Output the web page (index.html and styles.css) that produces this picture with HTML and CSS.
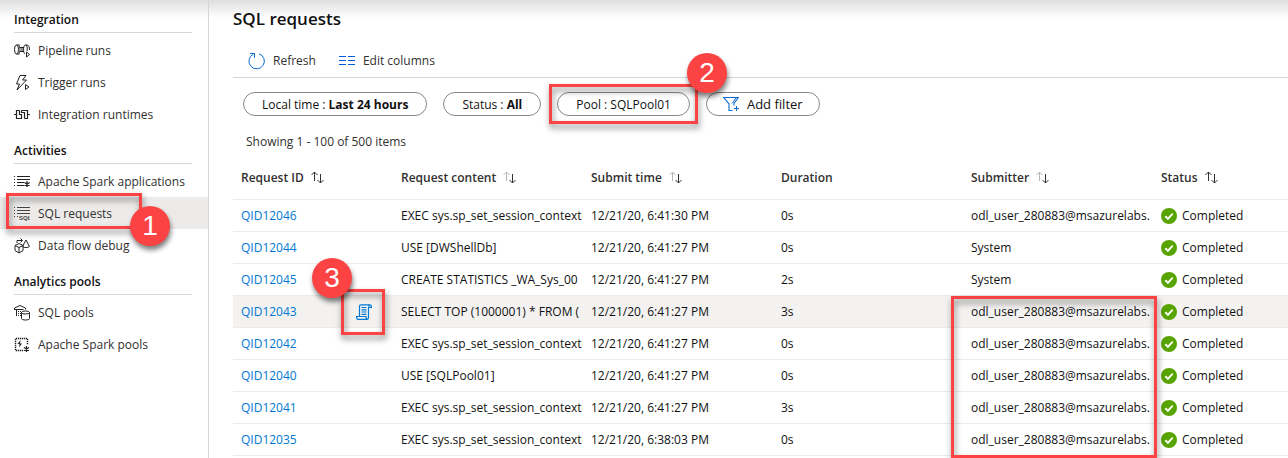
FILE: index.html
```html
<!DOCTYPE html>
<html lang="en">
<head>
<meta charset="utf-8">
<title>SQL requests</title>
<link rel="stylesheet" href="styles.css">
</head>
<body>
<svg class="defs" aria-hidden="true">
  <symbol id="sort" viewBox="0 0 16 16"><g fill="none" stroke="currentColor"><path class="sort-up" d="M4.500 11V2M1.500 5L4.500 2L7.500 5"/><path d="M10.500 4v9M7.500 10l3 3l3-3"/></g></symbol>
  <symbol id="ok" viewBox="0 0 16 16"><circle cx="8" cy="8" r="8" fill="#57a300"/><path d="M4.300 8.300l2.600 2.500 4.800-5.200" fill="none" stroke="#fff" stroke-width="1.900"/></symbol>
</svg>
<div class="app">
  <nav class="sidebar" aria-label="Monitor">
    <section class="group">
      <h2>Integration</h2>
      <ul>
        <li><a href="#"><svg class="icon" viewBox="0 0 16 16"><g fill="none" stroke="#222"><ellipse cx="2.500" cy="6.500" rx="2" ry="4.500"/><path d="M2.500 2h3M2.500 11h3"/><path d="M4.500 2c2 1 2 8 0 9M6 4.500h4M6 8.500h4M8 4.500v4"/><path d="M11 11c-2-1-2-8 0-9h2c2 0 2.500 2.500 2.500 5M12 2c1.500 1.500 1.500 4.500 1 6"/></g><path d="M12.500 9v5l3-2.500z" fill="#fff" stroke="#222"/></svg>Pipeline runs</a></li>
        <li><a href="#"><svg class="icon" viewBox="0 0 16 16"><path d="M6 .5h6L8.500 5h4L3 15l2.500-6h-3z" fill="none" stroke="#222"/><path d="M11.500 9.500v5l3.500-2.500z" fill="#fff" stroke="#222"/></svg>Trigger runs</a></li>
        <li><a href="#"><svg class="icon" viewBox="0 0 16 16"><path d="M0 7.500h2.500M13.500 7.500H16M5.500 3.500h-3v8h5v-4h-2v-4M7.500 3.500h6v8h-3M7.500 3.500v2h3v6" fill="none" stroke="#222" stroke-width="1.200"/></svg>Integration runtimes</a></li>
      </ul>
    </section>
    <section class="group">
      <h2>Activities</h2>
      <ul>
        <li><a href="#"><svg class="icon" viewBox="0 0 16 16"><path d="M3 2.500h13M3 5.500h13M3 8.500h7M3 11.500h7" stroke="#222"/><path d="M.5 2v1M.5 5v1M.5 8v1M.5 11v1" stroke="#222"/><path d="M13 7v6M10.400 8.500l5.200 3M15.600 8.500l-5.200 3" stroke="#222" stroke-width="1.200"/></svg>Apache Spark applications</a></li>
        <li class="current"><a href="#" aria-current="page"><svg class="icon" viewBox="0 0 16 16"><path d="M3 1.500h13M3 4.500h13M3 7.500h13" stroke="#444"/><path d="M.5 1v1M.5 4v1M.5 7v1M.5 10v1M3 10.500h1" stroke="#444"/><text class="sql" x="5" y="14">SQL</text></svg>SQL requests</a>
          <span class="box box-nav"></span><span class="badge badge-nav">1</span></li>
        <li><a href="#"><svg class="icon" viewBox="0 0 16 16"><g fill="none" stroke="#222"><path d="M5 5.500l4 2v5l-4 2.500-4-2.500v-5zM1 7.500l4 2 4-2M5 9.500V15"/><path d="M3 5V2.500h5M6.500.5l2 2-2 2"/><path d="M12 2L8.500 8.500c2 1.500 5 1.500 7 0z"/></g></svg>Data flow debug</a></li>
      </ul>
    </section>
    <section class="group">
      <h2>Analytics pools</h2>
      <ul>
        <li><a href="#"><svg class="icon" viewBox="0 0 16 16"><g fill="none" stroke="#222"><path d="M.5 5V3L6 .5 11.500 3v1.500M.5 4.500h9M2.500 5v6"/><path d="M4 6.500h3M4 8.500h3M4 10.500h3" stroke-dasharray="1 1"/><path d="M7.500 7.500v6c0 2 8 2 8 0v-6"/><ellipse cx="11.500" cy="7.500" rx="4" ry="1.500"/></g></svg>SQL pools</a></li>
        <li><a href="#"><svg class="icon" viewBox="0 0 16 16"><path d="M9 13.500H1.500v-12h12V8" fill="none" stroke="#222" stroke-width="1.500" stroke-dasharray="1.300 .7"/><path d="M6.500 3L3.500 7h2L5 10.500 8 6.500H6z" fill="#222"/><path d="M12.500 9v6M9.900 10.500l5.200 3M15.100 10.500l-5.200 3" stroke="#222" stroke-width="1.200"/></svg>Apache Spark pools</a></li>
      </ul>
    </section>
  </nav>
  <main class="main">
    <h1>SQL requests</h1>
    <div class="toolbar">
      <button type="button"><svg class="icon-lg" viewBox="0 0 18 18"><g fill="none" stroke="#0b6bd3"><path d="M11 1.800A7.700 7.700 0 1 1 5.300 2.200"/><path d="M2 1.500h4.500V6"/></g></svg>Refresh</button>
      <button type="button"><svg class="icon-lg" viewBox="0 0 18 18"><path d="M1 4.500h7M1 8.500h7M1 12.500h7M10 4.500h7M10 8.500h7M10 12.500h7" stroke="#015cda" stroke-width="1.200"/></svg>Edit columns</button>
    </div>
    <div class="filters">
      <button type="button" class="pill">Local time : <b>Last 24 hours</b></button>
      <button type="button" class="pill">Status : <b>All</b></button>
      <div class="marked"><button type="button" class="pill">Pool : SQLPool01</button><span class="box box-pool"></span><span class="badge badge-pool">2</span></div>
      <button type="button" class="pill add"><svg class="icon" viewBox="0 0 16 16"><path d="M11 9.500V7.500L15.300 1.500H.8L6 8v6.500h3.500" fill="none" stroke="#0b6bd3" stroke-width="1.100"/><path d="M9 7.500L13 2M13.500 10v5M11 12.500h5" stroke="#0b6bd3"/></svg>Add filter</button>
    </div>
    <p class="count">Showing 1 - 100 of 500 items</p>
    <table>
      <colgroup><col class="c-id"><col class="c-mid"><col class="c-mid"><col class="c-mid"><col class="c-mid"><col></colgroup>
      <thead>
        <tr>
          <th scope="col"><button type="button">Request ID<svg class="sort"><use href="#sort"/></svg></button></th>
          <th scope="col"><button type="button">Request content<svg class="sort dim"><use href="#sort"/></svg></button></th>
          <th scope="col"><button type="button">Submit time<svg class="sort dim"><use href="#sort"/></svg></button></th>
          <th scope="col">Duration</th>
          <th scope="col"><button type="button">Submitter<svg class="sort dim"><use href="#sort"/></svg></button></th>
          <th scope="col"><button type="button">Status<svg class="sort"><use href="#sort"/></svg></button></th>
        </tr>
      </thead>
      <tbody>
        <tr><td><a href="#">QID12046</a></td><td><div class="clip">EXEC sys.sp_set_session_context</div></td><td>12/21/20, 6:41:30 PM</td><td>0s</td><td><div class="clip">odl_user_280883@msazurelabs.</div></td><td><span class="status"><svg class="ok"><use href="#ok"/></svg>Completed</span></td></tr>
        <tr><td><a href="#">QID12044</a></td><td><div class="clip">USE [DWShellDb]</div></td><td>12/21/20, 6:41:27 PM</td><td>0s</td><td>System</td><td><span class="status"><svg class="ok"><use href="#ok"/></svg>Completed</span></td></tr>
        <tr><td><a href="#">QID12045</a></td><td><div class="clip">CREATE STATISTICS _WA_Sys_00</div></td><td>12/21/20, 6:41:27 PM</td><td>2s</td><td>System</td><td><span class="status"><svg class="ok"><use href="#ok"/></svg>Completed</span></td></tr>
        <tr class="hover">
          <td><div class="id-cell"><a href="#">QID12043</a><button type="button" class="script" aria-label="Request content"><svg class="icon" viewBox="0 0 16 16"><g fill="none" stroke="#0078d4" stroke-width="1.200"><path d="M3.500 12.500V2.500C3.500 1 4 .8 5 .8h9c1.300 0 1.500 1 1.500 2.700H13M13 3.500V1M12.500 3.500V13c0 1.500-.5 2.300-1.500 2.300H2C.8 15.300.6 14 .6 12.500H10c0 2 .3 2.800 1.300 2.800"/><path d="M5.500 3.500h5M5.500 5.800h5M5.500 8h5M5.500 10.300h5"/></g></svg></button></div><span class="box box-script"></span><span class="badge badge-script">3</span></td>
          <td><div class="clip">SELECT TOP (1000001) * FROM (</div></td><td>12/21/20, 6:41:27 PM</td><td>3s</td><td><div class="clip">odl_user_280883@msazurelabs.</div><span class="box box-users"></span></td><td><span class="status"><svg class="ok"><use href="#ok"/></svg>Completed</span></td></tr>
        <tr><td><a href="#">QID12042</a></td><td><div class="clip">EXEC sys.sp_set_session_context</div></td><td>12/21/20, 6:41:27 PM</td><td>0s</td><td><div class="clip">odl_user_280883@msazurelabs.</div></td><td><span class="status"><svg class="ok"><use href="#ok"/></svg>Completed</span></td></tr>
        <tr><td><a href="#">QID12040</a></td><td><div class="clip">USE [SQLPool01]</div></td><td>12/21/20, 6:41:27 PM</td><td>0s</td><td><div class="clip">odl_user_280883@msazurelabs.</div></td><td><span class="status"><svg class="ok"><use href="#ok"/></svg>Completed</span></td></tr>
        <tr><td><a href="#">QID12041</a></td><td><div class="clip">EXEC sys.sp_set_session_context</div></td><td>12/21/20, 6:41:27 PM</td><td>3s</td><td><div class="clip">odl_user_280883@msazurelabs.</div></td><td><span class="status"><svg class="ok"><use href="#ok"/></svg>Completed</span></td></tr>
        <tr><td><a href="#">QID12035</a></td><td><div class="clip">EXEC sys.sp_set_session_context</div></td><td>12/21/20, 6:38:03 PM</td><td>0s</td><td><div class="clip">odl_user_280883@msazurelabs.</div></td><td><span class="status"><svg class="ok"><use href="#ok"/></svg>Completed</span></td></tr>
      </tbody>
    </table>
  </main>
</div>
</body>
</html>
```
FILE: styles.css
```css
* { box-sizing: border-box; }
html { overflow: hidden; }
body {
  margin: 0;
  font: 12px/16px "Open Sans", "Noto Sans", sans-serif;
  color: #111;
  background: linear-gradient(#dedede, #fff 18px);
}
.defs { display: none; }
button { font: inherit; color: inherit; background: none; border: 0; padding: 0; margin: 0; }
a { color: inherit; text-decoration: none; }
h1, h2, p, ul { margin: 0; padding: 0; }
ul { list-style: none; }
.app { display: flex; min-height: 100vh; }

.sidebar { flex: 0 0 209px; border-right: 1px solid #d6d6d6; padding-top: 7px; }
.group { margin-bottom: 8px; }
.group h2 {
  margin: 0 16px 1px 14px;
  padding: 5px 0 4px;
  border-bottom: 1px solid #d9d9d9;
  font-size: 12px;
  line-height: 16px;
  font-weight: 600;
}
.group li { position: relative; }
.group li a { display: flex; align-items: center; gap: 8px; height: 32px; padding: 2px 0 0 14px; color: #323130; white-space: nowrap; }
.group .current { background: #ecebea; }
.icon { width: 16px; height: 16px; flex: none; }
.icon-lg { width: 18px; height: 18px; flex: none; }
.sql { font: bold 6px "Liberation Sans", sans-serif; fill: #444; }

.main { flex: 1; min-width: 0; padding-left: 24px; }
h1 { padding-top: 7px; font-size: 17px; line-height: 24px; font-weight: 600; }
.toolbar { display: flex; gap: 22px; height: 47px; padding: 12px 15px 0; border-bottom: 1px solid #d6d6d6; align-items: flex-start; }
.toolbar button { display: flex; align-items: center; gap: 7px; height: 36px; color: #323130; }
.filters { display: flex; gap: 16px; padding: 14px 10px 0; }
.pill { display: flex; align-items: center; height: 24px; padding: 2px 18px 0; border: 1px solid #8a8886; border-radius: 12px; background: #fff; white-space: pre; }
.pill b { font-weight: 700; }
.pill.add { gap: 8px; padding: 0 16px; font-size: 13px; }
.marked { position: relative; }
.count { padding: 18px 13px 7px; color: #323130; }

table { width: 100%; table-layout: fixed; border-collapse: separate; border-spacing: 0; }
.c-id { width: 160px; }
.c-mid { width: 190px; }
th, td { position: relative; padding: 0 0 0 8px; text-align: left; white-space: nowrap; }
th { height: 43px; border-bottom: 1px solid #edebe9; font-weight: 600; color: #323130; }
th button { display: flex; align-items: center; gap: 6px; }
td { height: 32px; border-bottom: 1px solid #edebe9; }
td a { color: #0078d4; }
.clip { overflow: hidden; }
.hover td { background: #f3f2f1; }
.sort { width: 16px; height: 16px; color: #323130; }
.dim { --up: #b8b6b4; }
.sort-up { stroke: var(--up, #323130); }
.status { display: flex; align-items: center; gap: 5px; }
.ok { width: 16px; height: 16px; }
.id-cell { display: flex; justify-content: space-between; padding-right: 21px; }
.script { display: flex; }

.box { position: absolute; z-index: 1; border: 3px solid #fc4343; filter: drop-shadow(1px 4px 3px rgba(0, 0, 0, .5)); pointer-events: none; }
.badge {
  position: absolute;
  z-index: 2;
  display: grid;
  place-items: center;
  width: 40px;
  height: 40px;
  border-radius: 50%;
  background: #fc4343;
  box-shadow: 1px 4px 5px rgba(0, 0, 0, .5);
  color: #fff;
  font: 28px/40px "Liberation Sans", sans-serif;
}
.box-nav { left: 6px; top: -4px; width: 136px; height: 36px; }
.badge-nav { left: 130px; top: 9px; }
.box-pool { inset: -8px; }
.badge-pool { right: -37px; top: -39px; }
.box-script { left: 108px; top: -7px; width: 44px; height: 46px; }
.badge-script { left: 79px; top: -38px; }
.box-users { left: -12px; right: -4px; top: 0; height: 162px; }
```
